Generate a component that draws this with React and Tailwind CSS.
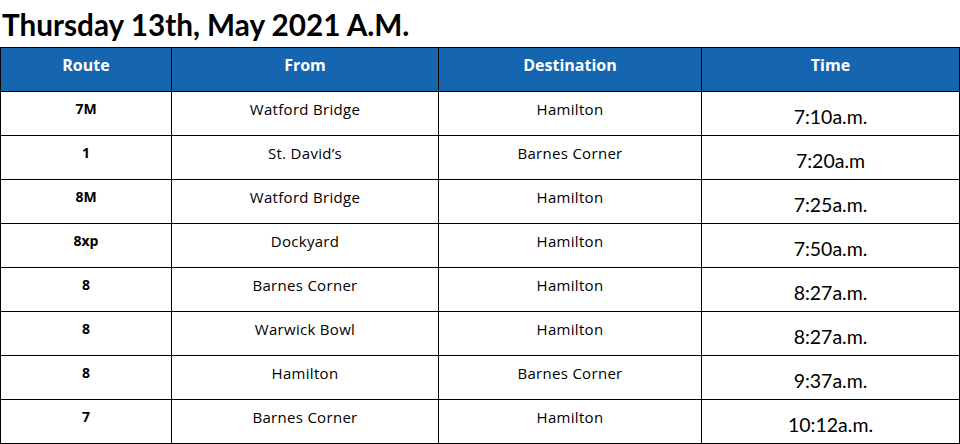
export default function App() {
  const rows = [
    ["7M", "Watford Bridge", "Hamilton", "7:10a.m."],
    ["1", "St. David’s", "Barnes Corner", "7:20a.m"],
    ["8M", "Watford Bridge", "Hamilton", "7:25a.m."],
    ["8xp", "Dockyard", "Hamilton", "7:50a.m."],
    ["8", "Barnes Corner", "Hamilton", "8:27a.m."],
    ["8", "Warwick Bowl", "Hamilton", "8:27a.m."],
    ["8", "Hamilton", "Barnes Corner", "9:37a.m."],
    ["7", "Barnes Corner", "Hamilton", "10:12a.m."],
  ];
  const cols = "grid grid-cols-[171px_267px_263px_258px]";
  return (
    <div className="w-[960px] h-[444px] bg-white overflow-hidden text-black" style={{ fontFamily: "'Open Sans', sans-serif" }}>
      <h1 className="h-[47px] pl-[2px] pt-[7px] text-[29.7px] leading-[36px] font-bold" style={{ fontFamily: "Lato, sans-serif" }}>
        Thursday 13th, May 2021 A.M.
      </h1>
      <div className="w-[960px] border-l border-t border-black">
        <div className={`${cols} h-[44px] bg-[#1565b0] border-b border-black`}>
          {["Route", "From", "Destination", "Time"].map((h, i) => (
            <div key={i} className="border-r border-black text-white font-bold text-[16px] text-center pt-[6px] leading-[22px]">
              {h}
            </div>
          ))}
        </div>
        {rows.map((r, i) => (
          <div key={i} className={`${cols} h-[44px] border-b border-black`}>
            <div className="border-r border-black text-center font-bold text-[14px] pt-[7px] leading-[20px]">{r[0]}</div>
            <div className="border-r border-black text-center text-[15px] tracking-[0.3px] pt-[7px] leading-[20px]">{r[1]}</div>
            <div className="border-r border-black text-center text-[15px] tracking-[0.3px] pt-[7px] leading-[20px]">{r[2]}</div>
            <div className="border-r border-black text-center text-[19.5px] pt-[14px] leading-[22px]" style={{ fontFamily: "Lato, sans-serif" }}>{r[3]}</div>
          </div>
        ))}
      </div>
    </div>
  );
}
